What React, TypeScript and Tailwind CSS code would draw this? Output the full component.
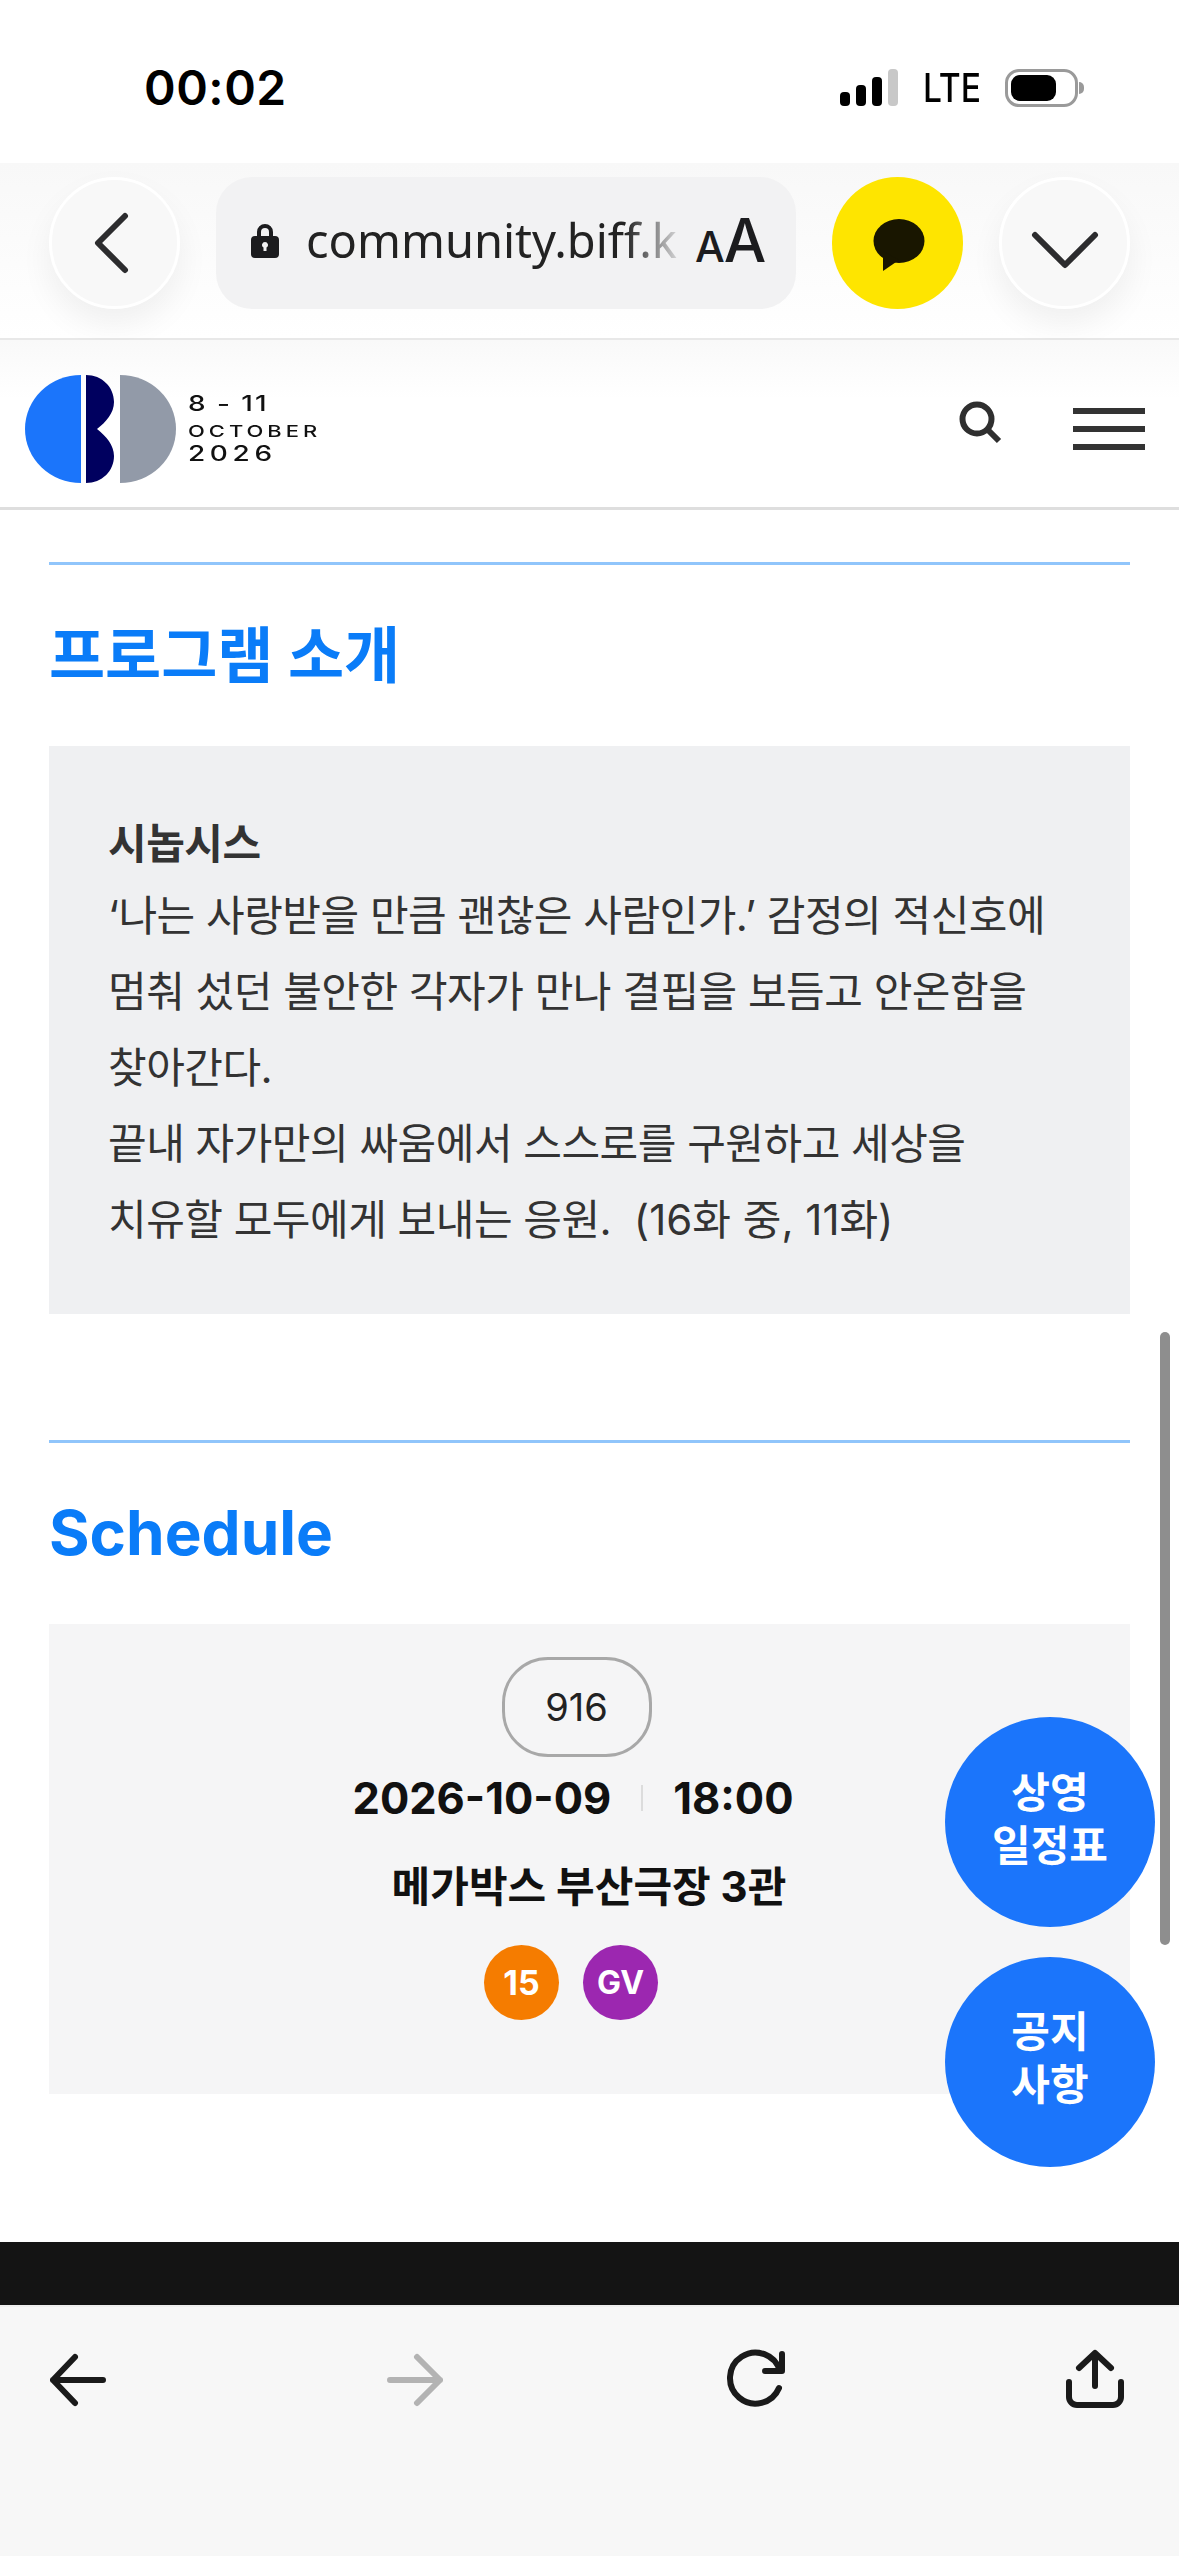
const kr = { fontFamily: '"Inter", "Noto Sans CJK KR", sans-serif' };

function StatusBar() {
  return (
    <div className="h-[163px] bg-white flex items-start justify-between pl-[144px] pr-[93px] pt-[60px]">
      <span className="text-[48px] leading-[56px] font-semibold text-black font-['Inter'] tracking-[0.5px]">00:02</span>
      <div className="h-[56px] flex items-center">
        <svg width="60" height="38" viewBox="0 0 60 38" fill="#000">
          <rect x="0" y="23" width="10" height="14" rx="4" />
          <rect x="16" y="16" width="10" height="21" rx="4" />
          <rect x="32" y="8" width="10" height="29" rx="4" />
          <rect x="48" y="0" width="10" height="37" rx="4" fill="#c8c8c8" />
        </svg>
        <span className="ml-[23px] w-[58px] text-[40px] leading-[44px] font-medium text-black font-['Inter'] origin-left scale-x-[0.84] whitespace-nowrap">LTE</span>
        <div className="relative ml-[24px] w-[73px] h-[38px] rounded-[14px] border-[3px] border-[#9a9a9a] py-[3px] px-[3px] mr-[8px]">
          <div className="w-[45px] h-full rounded-[9px] bg-black" />
          <div className="absolute -right-[9px] top-[10px] w-[5px] h-[12px] rounded-r-full bg-[#9a9a9a]" />
        </div>
      </div>
    </div>
  );
}

function BrowserBar() {
  return (
    <div className="h-[177px] bg-gradient-to-b from-[#f8f8f8] to-white flex items-start justify-between px-[49px] pt-[14px] border-b-2 border-[#e8e8e8]">
      <div className="w-[131px] h-[132px] rounded-full bg-[#f8f8f8] border-[3px] border-white shadow-[0_16px_32px_rgba(0,0,0,0.06)] flex items-center justify-center">
        <svg width="44" height="64" viewBox="0 0 44 64" fill="none" stroke="#2c2c2e" strokeWidth="6" strokeLinecap="round" strokeLinejoin="round">
          <path d="M32 5 L5 32 L32 59" />
        </svg>
      </div>
      <div className="w-[580px] h-[132px] rounded-[36px] bg-[#f2f2f3] flex items-center pl-[34px] overflow-hidden">
        <svg className="shrink-0 -mt-[6px]" width="30" height="36" viewBox="0 0 30 36" fill="#1c1c1e">
          <path fillRule="evenodd" d="M7 14V10a8 8 0 0 1 16 0v4h2a4 4 0 0 1 4 4v14a4 4 0 0 1-4 4H5a4 4 0 0 1-4-4V18a4 4 0 0 1 4-4h2Zm4 0h8V10a4 4 0 0 0-8 0v4Zm4 6a3 3 0 0 0-1.5 5.6V29h3v-3.4A3 3 0 0 0 15 20Z" />
        </svg>
        <span className="ml-[26px] -mt-[6px] shrink-0 whitespace-nowrap text-[47px] leading-[60px] text-[#222] font-['Noto_Sans'] [mask-image:linear-gradient(to_right,black_86%,rgba(0,0,0,0.15))]">community.biff.k</span>
        <span className="ml-[18px] flex items-baseline text-[#1c1c1e] font-['Inter'] font-medium tracking-[-1px]">
          <span className="text-[42px] leading-[50px]">A</span>
          <span className="text-[60px] leading-[50px]">A</span>
        </span>
      </div>
      <div className="w-[131px] h-[132px] rounded-full bg-[#fee500] flex items-center justify-center">
        <svg width="58" height="60" viewBox="0 0 58 60" fill="#191600">
          <ellipse cx="30" cy="28" rx="25.5" ry="22" />
          <path d="M14 38 V58 L30 47 Z" />
        </svg>
      </div>
      <div className="w-[131px] h-[132px] rounded-full bg-[#f8f8f8] border-[3px] border-white shadow-[0_16px_32px_rgba(0,0,0,0.06)] flex items-center justify-center">
        <svg width="70" height="60" viewBox="0 0 70 60" fill="none" stroke="#2c2c2e" strokeWidth="6" strokeLinecap="round" strokeLinejoin="round">
          <path d="M5 22 L35 52 L65 22" />
        </svg>
      </div>
    </div>
  );
}

function SiteHeader() {
  return (
    <div className="h-[170px] bg-gradient-to-b from-[#f9f9f9] to-white to-[35%] border-b-[3px] border-[#dedede] flex items-center justify-between pl-[25px] pr-[34px] pt-[11px]">
      <div className="flex items-center gap-[11px]">
        <svg width="152" height="108" viewBox="0 0 152 108">
          <path d="M56 0 V108 A56 54 0 0 1 56 0 Z" fill="#1b75fb" />
          <path d="M61 0 C77 0 89 12 89 27 C89 38 81 47 72 54 C81 61 89 70 89 81 C89 96 77 108 61 108 Z" fill="#00005f" />
          <path d="M95 0 A56 54 0 0 1 95 108 Z" fill="#929aa8" />
        </svg>
        <div className="mb-[4px] flex flex-col font-['Inter'] font-medium text-[#111] origin-left scale-x-[1.33] w-[100px] whitespace-nowrap">
          <span className="text-[21px] leading-[24px] tracking-[1.5px]">8 - 11</span>
          <span className="text-[16.5px] leading-[30px] tracking-[3px]">OCTOBER</span>
          <span className="text-[21px] leading-[16px] tracking-[3.5px]">2026</span>
        </div>
      </div>
      <div className="flex items-center gap-[70px]">
        <svg className="-mt-[12px]" width="44" height="44" viewBox="0 0 44 44" fill="none" stroke="#2f2f2f" strokeWidth="6">
          <circle cx="18" cy="18" r="14.5" />
          <path d="M29 29 L40 40" />
        </svg>
        <div className="w-[72px] flex flex-col gap-[12px]">
          <div className="h-[6px] bg-[#333]" />
          <div className="h-[6px] bg-[#333]" />
          <div className="h-[6px] bg-[#333]" />
        </div>
      </div>
    </div>
  );
}

function Synopsis() {
  return (
    <section className="mx-[49px] mt-[52px] border-t-[3px] border-[#90c5fb]">
      <h2 className="mt-[49px] text-[61px] leading-[84px] font-bold text-[#0a7cf8]" style={kr}>프로그램 소개</h2>
      <div className="mt-[48px] h-[568px] bg-[#eff0f2] pl-[59px] pt-[64px] text-[42px] leading-[76px] tracking-[-0.5px] text-[#333]" style={kr}>
        <p className="font-bold leading-[68px]">시놉시스</p>
        <p>
          ‘나는 사랑받을 만큼 괜찮은 사람인가.’ 감정의 적신호에<br />
          멈춰 섰던 불안한 각자가 만나 결핍을 보듬고 안온함을<br />
          찾아간다.<br />
          끝내 자가만의 싸움에서 스스로를 구원하고 세상을<br />
          치유할 모두에게 보내는 응원.&nbsp; <span className="tracking-normal">(16화 중, 11화)</span>
        </p>
      </div>
    </section>
  );
}

function Schedule() {
  return (
    <section className="mx-[49px] mt-[126px] border-t-[3px] border-[#90c5fb]">
      <h2 className="mt-[48px] text-[62px] leading-[84px] font-bold text-[#0a7cf8] font-['Inter']">Schedule</h2>
      <div className="mt-[49px] h-[470px] bg-[#f5f5f6] flex flex-col items-center pt-[33px] pr-[29px]" style={kr}>
        <div className="ml-[3px] w-[150px] h-[100px] rounded-[46px] border-[3px] border-[#a8a8a8] flex items-center justify-center text-[38px] text-[#222] font-['Inter']">916</div>
        <div className="mt-[13px] mr-[4px] flex items-center text-[43.5px] leading-[56px] font-bold text-[#111] font-['Inter']">
          <span>2026-10-09</span>
          <span className="mx-[30px] w-[2px] h-[26px] bg-[#dcdcdc]" />
          <span>18:00</span>
        </div>
        <p className="mt-[33px] ml-[28px] text-[42px] leading-[56px] font-bold text-[#111]">메가박스 부산극장 3관</p>
        <div className="mt-[30px] mr-[8px] flex gap-[24px]">
          <span className="w-[75px] h-[75px] rounded-full bg-[#f57c00] flex items-center justify-center text-[34px] font-bold text-white font-['Inter']">15</span>
          <span className="w-[75px] h-[75px] rounded-full bg-[#9c27b0] flex items-center justify-center text-[32px] font-bold text-white font-['Inter']">GV</span>
        </div>
      </div>
    </section>
  );
}

function BottomBar() {
  return (
    <div className="flex-1 bg-[#f7f7f7] border-t-2 border-[#efefef] flex items-start pl-[50px] pt-[45px]">
      <svg width="56" height="56" viewBox="0 0 56 56" fill="none" stroke="#1a1a1a" strokeWidth="6" strokeLinecap="round" strokeLinejoin="round">
        <path d="M53 28 H3 M25 5 L3 28 L25 51" />
      </svg>
      <svg className="ml-[281px]" width="56" height="56" viewBox="0 0 56 56" fill="none" stroke="#b3b3b3" strokeWidth="6" strokeLinecap="round" strokeLinejoin="round">
        <path d="M3 28 H53 M30 5 L53 28 L30 51" />
      </svg>
      <svg className="ml-[282px] -mt-[3px]" width="62" height="62" viewBox="0 0 62 62" fill="none" stroke="#1a1a1a" strokeWidth="6" strokeLinecap="round" strokeLinejoin="round">
        <path d="M54 39 A25.5 25.5 0 1 1 55 22 M57 5 V22 H40" />
      </svg>
      <svg className="ml-[277px] -mt-[4px]" width="62" height="62" viewBox="0 0 62 62" fill="none" stroke="#1a1a1a" strokeWidth="6" strokeLinecap="round" strokeLinejoin="round">
        <path d="M31 38 V6 M15 20 L31 5 L47 20 M5 34 V49 A8 8 0 0 0 13 57 H49 A8 8 0 0 0 57 49 V34" />
      </svg>
    </div>
  );
}

export default function App() {
  return (
    <div className="relative w-[1179px] h-[2556px] flex flex-col overflow-hidden bg-white">
      <StatusBar />
      <BrowserBar />
      <SiteHeader />
      <div className="h-[1732px] flex flex-col">
        <Synopsis />
        <Schedule />
      </div>
      <div className="h-[63px] bg-[#141414]" />
      <BottomBar />

      {/* scrollbar + floating buttons sit over the page */}
      <div className="absolute left-[1160px] top-[1332px] w-[10px] h-[613px] rounded-full bg-[#8e8e8e]" />
      <div className="absolute left-[945px] top-[1717px] w-[210px] h-[210px] pb-[6px] rounded-full bg-[#1b75fb] flex items-center justify-center text-center text-[42px] leading-[53px] font-bold text-white" style={kr}>
        상영<br />일정표
      </div>
      <div className="absolute left-[945px] top-[1957px] w-[210px] h-[210px] pb-[8px] rounded-full bg-[#1b75fb] flex items-center justify-center text-center text-[42px] leading-[53px] font-bold text-white" style={kr}>
        공지<br />사항
      </div>
    </div>
  );
}
